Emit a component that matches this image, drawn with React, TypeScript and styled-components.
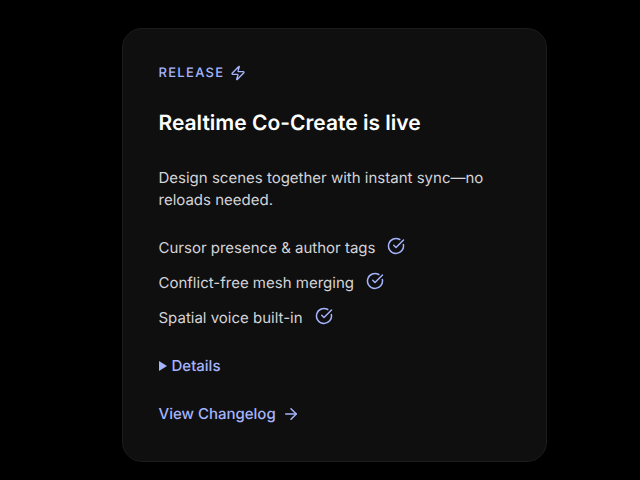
import React from "react";
import styled, { createGlobalStyle } from "styled-components";
import { ArrowRight, CircleCheckBig, Zap } from "lucide-react";

const GlobalStyle = createGlobalStyle`
  *, *::before, *::after { box-sizing: border-box; }
  body {
    margin: 0;
    background: #000;
    color: #d4d4d8;
    font-family: Inter, sans-serif;
    text-rendering: geometricPrecision;
  }
`;

const Page = styled.main`
  min-height: 100vh;
  display: flex;
  justify-content: center;
  align-items: flex-start;
  padding: 28px 16px 16px 44px;
`;

const Card = styled.article`
  width: 100%;
  max-width: 425px;
  padding: 36px;
  display: flex;
  flex-direction: column;
  align-items: flex-start;
  gap: 26px;
  background: #0f0f0f;
  border: 1px solid #1c1c1e;
  border-radius: 20px;
  font-size: 15px;
  line-height: 22px;
`;

const Eyebrow = styled.p`
  margin: 0;
  display: flex;
  align-items: center;
  gap: 6px;
  color: #a5b4fc;
  font-size: 13px;
  line-height: 16px;
  font-weight: 500;
  letter-spacing: 0.1em;
  text-transform: uppercase;
`;

const Title = styled.h1`
  margin: 0;
  color: #fff;
  font-size: 21px;
  line-height: 34px;
  font-weight: 600;
`;

const Lead = styled.p`
  margin: 0;
`;

const Features = styled.ul`
  margin: 0;
  padding: 0;
  display: grid;
  gap: 13px;
  list-style: none;
`;

const Feature = styled.li`
  display: flex;
  align-items: flex-start;
  gap: 12px;

  svg { color: #a5b4fc; }
`;

const Details = styled.details`
  color: #a5b4fc;
  font-weight: 500;
`;

const Summary = styled.summary`
  display: flex;
  align-items: center;
  gap: 5px;
  cursor: pointer;

  &::before {
    content: "";
    border-left: 8px solid currentColor;
    border-top: 5px solid transparent;
    border-bottom: 5px solid transparent;
  }

  details[open] > &::before { transform: rotate(90deg); }
`;

const ChangelogLink = styled.a`
  display: flex;
  align-items: center;
  gap: 6px;
  color: #a5b4fc;
  font-weight: 500;
  text-decoration: none;
`;

const features = [
  "Cursor presence & author tags",
  "Conflict-free mesh merging",
  "Spatial voice built-in",
];

export default function App() {
  return (
    <>
      <GlobalStyle />
      <Page>
        <Card>
          <Eyebrow>Release <Zap size={16} aria-hidden /></Eyebrow>
          <Title>Realtime Co-Create is live</Title>
          <Lead>Design scenes together with instant sync—no reloads needed.</Lead>
          <Features>
            {features.map((text) => (
              <Feature key={text}>{text}<CircleCheckBig size={18} aria-hidden /></Feature>
            ))}
          </Features>
          <Details>
            <Summary>Details</Summary>
          </Details>
          <ChangelogLink href="#changelog">View Changelog <ArrowRight size={18} aria-hidden /></ChangelogLink>
        </Card>
      </Page>
    </>
  );
}
